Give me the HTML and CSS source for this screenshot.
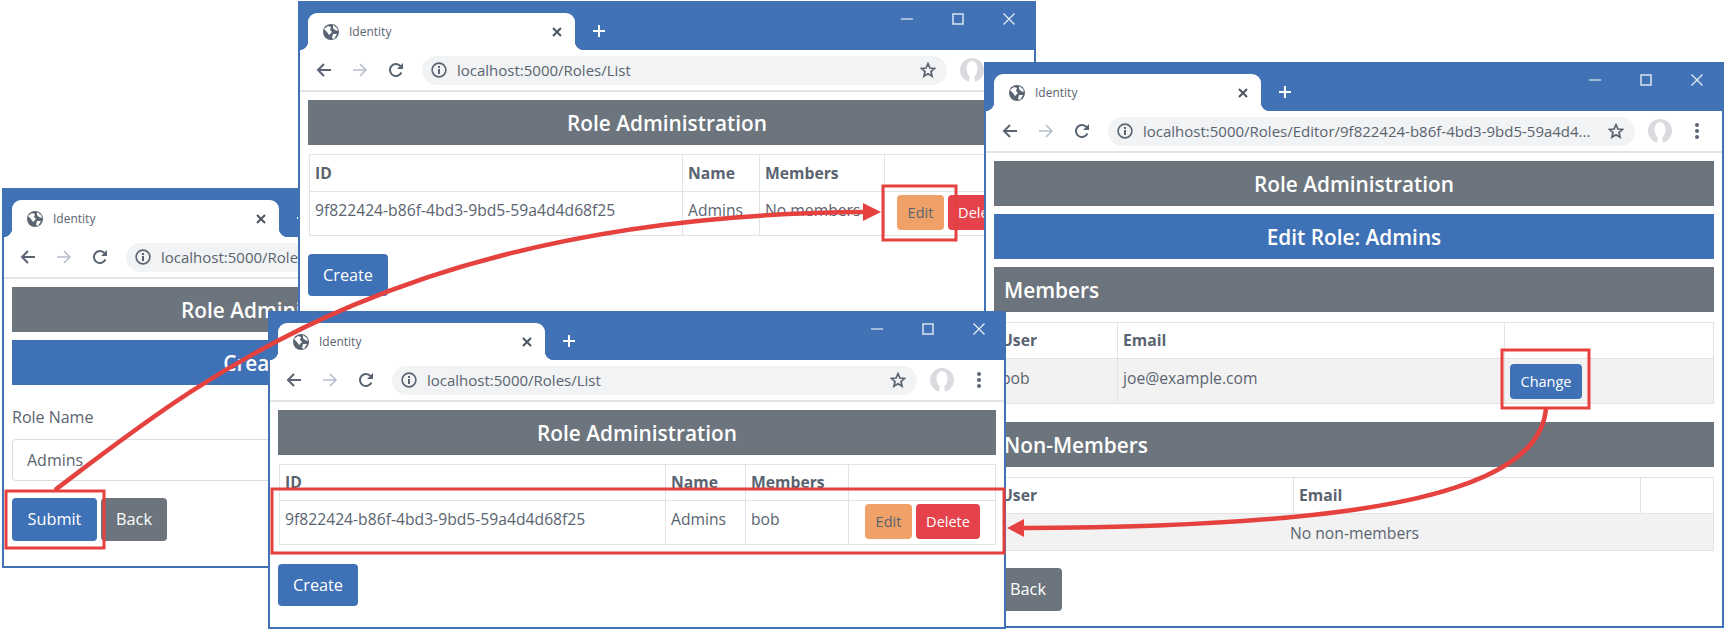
FILE: index.html

```html
<!DOCTYPE html>
<html lang="en">
<head>
    <meta charset="UTF-8">
    <title>Identity</title>
    <link rel="stylesheet" href="styles.css">
</head>
<body>
    <svg class="icon-defs" width="0" height="0">
        <symbol id="i-globe" viewBox="0 0 16 16">
            <circle cx="8" cy="8" r="8" fill="#5a6472"/>
            <path d="M1 5 L5 2 L8 3 L7 6 L9 8 L6 11 L4 8 Z M10 1 L14 4 L15 7 L12 6 L10 4 Z M10 10 L14 10 L11 15 L9 14 Z" fill="#fff"/>
        </symbol>
        <symbol id="i-back" viewBox="0 0 16 16">
            <path d="M15 8 H2 M8 2 L2 8 L8 14" fill="none" stroke="currentColor" stroke-width="2"/>
        </symbol>
        <symbol id="i-forward" viewBox="0 0 16 16">
            <path d="M1 8 H14 M8 2 L14 8 L8 14" fill="none" stroke="currentColor" stroke-width="1.6"/>
        </symbol>
        <symbol id="i-reload" viewBox="0 0 16 16">
            <path d="M13.4 10.5 A6 6 0 1 1 12.6 4.2" fill="none" stroke="currentColor" stroke-width="2"/>
            <path d="M15 1 V7 H9 Z" fill="currentColor"/>
        </symbol>
        <symbol id="i-info" viewBox="0 0 16 16">
            <circle cx="8" cy="8" r="6.9" fill="none" stroke="currentColor" stroke-width="1.6"/>
            <path d="M7 7 H9 V12 H7 Z M7 4 H9 V6 H7 Z" fill="currentColor"/>
        </symbol>
        <symbol id="i-star" viewBox="0 0 16 16">
            <path d="M8 1.6 L9.9 6 L14.6 6.4 L11 9.5 L12.1 14.2 L8 11.7 L3.9 14.2 L5 9.5 L1.4 6.4 L6.1 6 Z" fill="none" stroke="currentColor" stroke-width="1.7"/>
        </symbol>
        <symbol id="i-avatar" viewBox="0 0 24 24">
            <circle cx="12" cy="12" r="12" fill="#d9dbdf"/>
            <ellipse cx="12" cy="11" rx="5.5" ry="8" fill="#fff"/>
            <path d="M9 24 L10 17 H14 L15 24 Z" fill="#fff"/>
        </symbol>
        <symbol id="i-dots" viewBox="0 0 4 16">
            <circle cx="2" cy="2" r="2" fill="currentColor"/>
            <circle cx="2" cy="8" r="2" fill="currentColor"/>
            <circle cx="2" cy="14" r="2" fill="currentColor"/>
        </symbol>
        <symbol id="i-close" viewBox="0 0 10 10">
            <path d="M1 1 L9 9 M9 1 L1 9" fill="none" stroke="currentColor" stroke-width="2"/>
        </symbol>
        <symbol id="i-plus" viewBox="0 0 14 14">
            <path d="M7 1 V13 M1 7 H13" fill="none" stroke="currentColor" stroke-width="2"/>
        </symbol>
        <symbol id="i-min" viewBox="0 0 12 12">
            <path d="M0 6 H12" stroke="currentColor" stroke-width="1.2"/>
        </symbol>
        <symbol id="i-max" viewBox="0 0 12 12">
            <rect x="1" y="1" width="10" height="10" fill="none" stroke="currentColor" stroke-width="1.4"/>
        </symbol>
        <symbol id="i-x" viewBox="0 0 12 12">
            <path d="M0.5 0.5 L11.5 11.5 M11.5 0.5 L0.5 11.5" fill="none" stroke="currentColor" stroke-width="1.3"/>
        </symbol>
    </svg>

    <div class="desktop">

        <!-- create role -->
        <div class="window win-create">
            <div class="titlebar">
                <div class="tab">
                    <svg class="tab-globe"><use href="#i-globe"/></svg>
                    <span class="tab-title">Identity</span>
                    <svg class="tab-close"><use href="#i-close"/></svg>
                </div>
                <svg class="new-tab"><use href="#i-plus"/></svg>
            </div>
            <div class="toolbar">
                <svg class="nav"><use href="#i-back"/></svg>
                <svg class="nav nav-off"><use href="#i-forward"/></svg>
                <svg class="nav"><use href="#i-reload"/></svg>
                <div class="address">
                    <svg class="nav"><use href="#i-info"/></svg>
                    <span class="url">localhost:5000/Roles/Create</span>
                </div>
            </div>
            <div class="content">
                <div class="banner banner-gray">Role Administration</div>
                <div class="banner banner-blue">Create Role</div>
                <label class="field-label">Role Name</label>
                <div class="field">Admins</div>
                <div class="actions">
                    <a class="btn btn-blue btn-submit">Submit</a>
                    <a class="btn btn-gray btn-back">Back</a>
                </div>
            </div>
        </div>

        <!-- role list, no members yet -->
        <div class="window win-list">
            <div class="titlebar">
                <div class="tab">
                    <svg class="tab-globe"><use href="#i-globe"/></svg>
                    <span class="tab-title">Identity</span>
                    <svg class="tab-close"><use href="#i-close"/></svg>
                </div>
                <svg class="new-tab"><use href="#i-plus"/></svg>
                <div class="controls">
                    <svg><use href="#i-min"/></svg>
                    <svg><use href="#i-max"/></svg>
                    <svg><use href="#i-x"/></svg>
                </div>
            </div>
            <div class="toolbar">
                <svg class="nav"><use href="#i-back"/></svg>
                <svg class="nav nav-off"><use href="#i-forward"/></svg>
                <svg class="nav"><use href="#i-reload"/></svg>
                <div class="address">
                    <svg class="nav"><use href="#i-info"/></svg>
                    <span class="url">localhost:5000/Roles/List</span>
                    <svg class="nav star"><use href="#i-star"/></svg>
                </div>
                <svg class="avatar"><use href="#i-avatar"/></svg>
                <svg class="dots"><use href="#i-dots"/></svg>
            </div>
            <div class="content">
                <div class="banner banner-gray">Role Administration</div>
                <table class="grid">
                    <colgroup><col class="c-373"><col class="c-77"><col class="c-125"><col></colgroup>
                    <tr><th>ID</th><th>Name</th><th>Members</th><th></th></tr>
                    <tr>
                        <td>9f822424-b86f-4bd3-9bd5-59a4d4d68f25</td>
                        <td>Admins</td>
                        <td>No members</td>
                        <td class="cell-actions"><a class="btn btn-small btn-orange">Edit</a><a class="btn btn-small btn-red">Delete</a></td>
                    </tr>
                </table>
                <a class="btn btn-blue btn-create">Create</a>
            </div>
        </div>

        <!-- role editor -->
        <div class="window win-editor">
            <div class="titlebar">
                <div class="tab">
                    <svg class="tab-globe"><use href="#i-globe"/></svg>
                    <span class="tab-title">Identity</span>
                    <svg class="tab-close"><use href="#i-close"/></svg>
                </div>
                <svg class="new-tab"><use href="#i-plus"/></svg>
                <div class="controls">
                    <svg><use href="#i-min"/></svg>
                    <svg><use href="#i-max"/></svg>
                    <svg><use href="#i-x"/></svg>
                </div>
            </div>
            <div class="toolbar">
                <svg class="nav"><use href="#i-back"/></svg>
                <svg class="nav nav-off"><use href="#i-forward"/></svg>
                <svg class="nav"><use href="#i-reload"/></svg>
                <div class="address">
                    <svg class="nav"><use href="#i-info"/></svg>
                    <span class="url">localhost:5000/Roles/Editor/9f822424-b86f-4bd3-9bd5-59a4d4...</span>
                    <svg class="nav star"><use href="#i-star"/></svg>
                </div>
                <svg class="avatar"><use href="#i-avatar"/></svg>
                <svg class="dots"><use href="#i-dots"/></svg>
            </div>
            <div class="content">
                <div class="banner banner-gray">Role Administration</div>
                <div class="banner banner-blue">Edit Role: Admins</div>
                <div class="banner banner-gray banner-left">Members</div>
                <table class="grid grid-striped">
                    <colgroup><col class="c-122"><col class="c-387"><col></colgroup>
                    <tr><th>User</th><th>Email</th><th></th></tr>
                    <tr>
                        <td>bob</td>
                        <td>joe@example.com</td>
                        <td class="cell-change"><a class="btn btn-small btn-blue">Change</a></td>
                    </tr>
                </table>
                <div class="banner banner-gray banner-left banner-next">Non-Members</div>
                <table class="grid grid-striped">
                    <colgroup><col class="c-298"><col class="c-347"><col></colgroup>
                    <tr><th>User</th><th>Email</th><th></th></tr>
                    <tr><td class="cell-empty" colspan="3">No non-members</td></tr>
                </table>
                <a class="btn btn-gray btn-back btn-low">Back</a>
            </div>
        </div>

        <!-- role list after the change -->
        <div class="window win-result">
            <div class="titlebar">
                <div class="tab">
                    <svg class="tab-globe"><use href="#i-globe"/></svg>
                    <span class="tab-title">Identity</span>
                    <svg class="tab-close"><use href="#i-close"/></svg>
                </div>
                <svg class="new-tab"><use href="#i-plus"/></svg>
                <div class="controls">
                    <svg><use href="#i-min"/></svg>
                    <svg><use href="#i-max"/></svg>
                    <svg><use href="#i-x"/></svg>
                </div>
            </div>
            <div class="toolbar">
                <svg class="nav"><use href="#i-back"/></svg>
                <svg class="nav nav-off"><use href="#i-forward"/></svg>
                <svg class="nav"><use href="#i-reload"/></svg>
                <div class="address">
                    <svg class="nav"><use href="#i-info"/></svg>
                    <span class="url">localhost:5000/Roles/List</span>
                    <svg class="nav star"><use href="#i-star"/></svg>
                </div>
                <svg class="avatar"><use href="#i-avatar"/></svg>
                <svg class="dots"><use href="#i-dots"/></svg>
            </div>
            <div class="content">
                <div class="banner banner-gray">Role Administration</div>
                <table class="grid">
                    <colgroup><col class="c-386"><col class="c-80"><col class="c-103"><col></colgroup>
                    <tr><th>ID</th><th>Name</th><th>Members</th><th></th></tr>
                    <tr>
                        <td>9f822424-b86f-4bd3-9bd5-59a4d4d68f25</td>
                        <td>Admins</td>
                        <td>bob</td>
                        <td class="cell-actions"><a class="btn btn-small btn-orange">Edit</a><a class="btn btn-small btn-red">Delete</a></td>
                    </tr>
                </table>
                <a class="btn btn-blue btn-create">Create</a>
            </div>
        </div>

        <!-- callouts drawn over the windows -->
        <svg class="callouts" viewBox="0 0 1725 632">
            <g fill="none" stroke="#e5413f" stroke-width="3">
                <rect x="6" y="491" width="98" height="57"/>
                <rect x="883" y="186" width="73" height="54"/>
                <rect x="1502" y="350" width="87" height="58"/>
                <rect x="272" y="489" width="732" height="64"/>
            </g>
            <g fill="none" stroke="#e5413f" stroke-width="4.5">
                <path d="M55 490 C200 380 400 215 865 212"/>
                <path d="M1546 408 C1540 490 1380 527 1023 528"/>
            </g>
            <g fill="#e5413f">
                <path d="M881 212 L863 203 L863 221 Z"/>
                <path d="M1007 528 L1024 519 L1024 537 Z"/>
            </g>
        </svg>
    </div>
</body>
</html>
```

FILE: styles.css

```css
* { box-sizing: border-box; }
body { margin: 0; background: #fff; font-family: "Open Sans", Arial, sans-serif; color: #5a6470; }
.icon-defs { position: absolute; }

.desktop { position: relative; width: 1725px; height: 632px; overflow: hidden; }
.callouts { position: absolute; left: 0; top: 0; width: 1725px; height: 632px; }

/* windows sit on a free canvas */
.window { position: absolute; background: #fff; border: 2px solid #4172b5; overflow: hidden; }
.win-create { left: 2px; top: 188px; width: 558px; height: 380px; }
.win-list { left: 298px; top: 1px; width: 738px; height: 340px; }
.win-editor { left: 984px; top: 62px; width: 740px; height: 566px; }
.win-result { left: 268px; top: 311px; width: 738px; height: 318px; }

.titlebar { display: flex; align-items: flex-end; height: 47px; background: #4172b5; padding-left: 8px; color: #fff; }
.tab { position: relative; display: flex; align-items: center; width: 267px; height: 37px; padding-left: 15px; background: #fff; border-radius: 9px 9px 0 0; }
.tab::before, .tab::after { content: ""; position: absolute; bottom: 0; width: 9px; height: 9px; }
.tab::before { left: -9px; background: radial-gradient(circle at 0 0, #4172b5 9px, #fff 9.5px); }
.tab::after { right: -9px; background: radial-gradient(circle at 100% 0, #4172b5 9px, #fff 9.5px); }
.tab-globe { width: 16px; height: 16px; flex: none; }
.tab-title { margin-left: 10px; font-size: 12px; color: #5a6470; }
.tab-close { width: 10px; height: 10px; margin-left: auto; margin-right: 13px; color: #4a5360; }
.new-tab { width: 14px; height: 14px; margin-left: 17px; margin-bottom: 12px; flex: none; }
.controls { display: flex; gap: 39px; margin-left: auto; margin-right: 19px; align-self: flex-start; margin-top: 10px; color: #e6ecf5; }
.controls svg { width: 12px; height: 12px; }

.toolbar { display: flex; align-items: center; height: 42px; padding-left: 16px; border-bottom: 2px solid #e4e4e4; color: #5a6472; }
.nav { width: 16px; height: 16px; flex: none; margin-right: 20px; }
.nav-off { color: #b6bfcd; }
.address { display: flex; align-items: center; flex: 1; min-width: 0; height: 29px; margin-left: -2px; padding: 0 11px 0 9px; background: #f1f3f4; border-radius: 15px; white-space: nowrap; }
.address .nav { margin-right: 10px; }
.address .star { margin: 0 0 0 auto; }
.url { font-size: 15px; color: #5a6470; }
.avatar { width: 24px; height: 24px; flex: none; margin-left: 13px; }
.dots { width: 4px; height: 16px; flex: none; margin: 0 23px; }

.content { padding: 8px 8px 0; }

.banner { height: 45px; margin-bottom: 8px; line-height: 47px; text-align: center; color: #fff; font-size: 20.8px; font-weight: 600; }
.banner-gray { background: #6c757d; }
.banner-blue { background: #3f71b6; }
.banner-left { padding-left: 10px; text-align: left; margin-bottom: 10px; }
.banner-next { margin-top: 18px; }

.grid { width: calc(100% - 1px); margin-left: 1px; table-layout: fixed; border-collapse: collapse; font-size: 15.7px; }
.win-list .grid, .win-result .grid { margin-top: 9px; }
.grid th, .grid td { border: 1px solid #e3e3e3; padding: 0 5px; text-align: left; vertical-align: top; }
.grid th { height: 36px; line-height: 35px; font-weight: 700; }
.win-list .grid th { padding-top: 1px; }
.grid td { height: 44px; line-height: 36px; }
.grid-striped td { height: 45px; padding-top: 2px; line-height: 34px; background: #f2f2f2; }
.cell-actions { padding: 3px 0 0 12px !important; white-space: nowrap; line-height: 1 !important; }
.win-result .cell-actions { padding-left: 16px !important; }
.cell-change { padding: 5px 0 0 5px !important; line-height: 1 !important; }
.grid .cell-empty { height: 37px; text-align: center; }
.c-373 { width: 373px; }
.c-77 { width: 77px; }
.c-125 { width: 125px; }
.c-386 { width: 386px; }
.c-80 { width: 80px; }
.c-103 { width: 103px; }
.c-122 { width: 122px; }
.c-387 { width: 387px; }
.c-298 { width: 298px; }
.c-347 { width: 347px; }

.btn { display: inline-block; height: 43px; padding: 0 13px; line-height: 43px; border-radius: 4px; color: #fff; font-size: 16.3px; text-align: center; }
.btn-blue { background: #3f71b6; }
.btn-gray { background: #6c757d; }
.btn-orange { background: #f0a167; color: #5a6470; width: 47px; }
.btn-red { background: #e5424b; margin-left: 4px; width: 64px; }
.btn-small { height: 35px; line-height: 35px; font-size: 14.5px; padding: 0; vertical-align: top; }
.cell-change .btn-small { width: 72px; }
.btn-create { display: block; margin-top: 18px; height: 42px; line-height: 42px; width: 80px; padding: 0; }
.win-result .btn-create { margin-top: 19px; }
.btn-submit { width: 85px; padding: 0; }
.btn-back { width: 66px; padding: 0; margin-left: 4px; }
.btn-low { display: block; margin: 17px 0 0; width: 68px; }

.field-label { display: block; margin-top: 20px; line-height: 24px; font-size: 16px; }
.field { height: 42px; margin-top: 10px; padding-left: 14px; line-height: 40px; border: 1px solid #ddd; border-radius: 4px; font-size: 16px; }
.actions { margin-top: 17px; display: flex; }
```
